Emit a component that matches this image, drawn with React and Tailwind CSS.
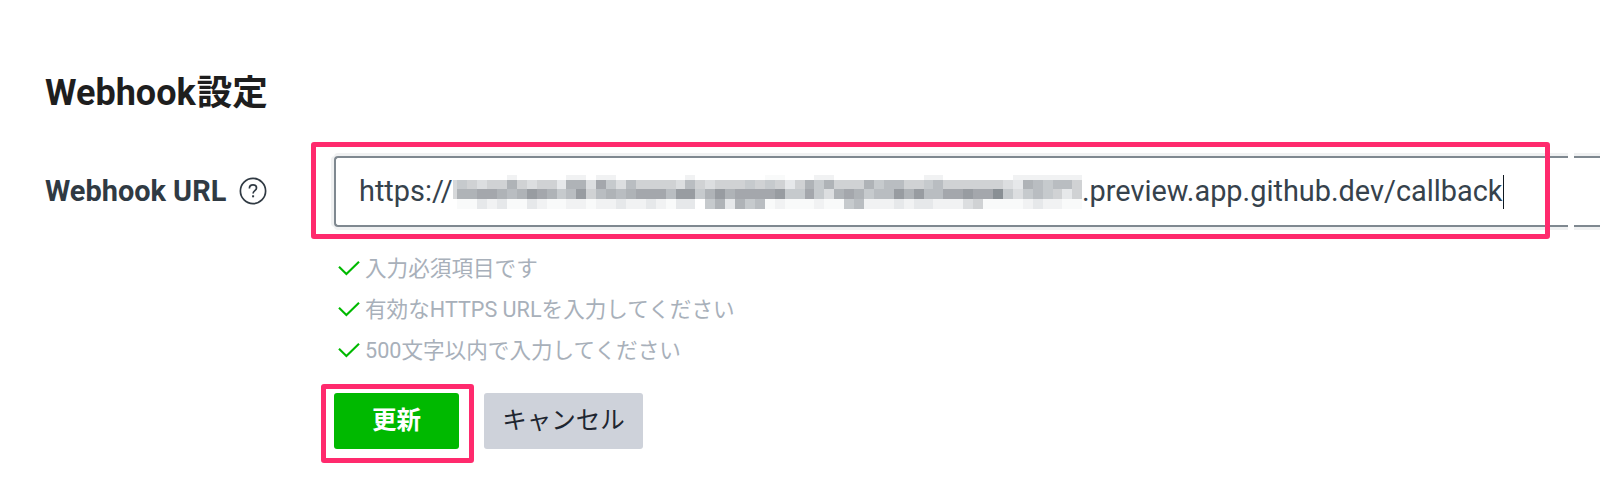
import React from "react";

const SHADES = {
  0: "#ffffff", 1: "#f9fafa", 2: "#f1f2f3", 3: "#e6e8ea", 4: "#dcdee0", 5: "#d0d2d4",
  6: "#c6cacd", 7: "#b9bdc1", 8: "#afb3b7", 9: "#a4a7ac", A: "#989ca1", B: "#898f94",
};

// One character per cell of the redacted host name, from light (0) to dark (B).
const ROWS = [
  "0000020000" + "0220220000" + "0002000000" + "0110002200" + "0000000220" + "0000002222" + "222",
  "6545585455" + "3884964755" + "5547545556" + "5653586855" + "5867755675" + "5555543876" + "775",
  "8899878A98" + "67A5787899" + "97AA68A899" + "99A6696489" + "8677A8A779" + "9A99B64676" + "535",
  "1132311321" + "1221223223" + "2133068386" + "7121112116" + "7222323322" + "2451111232" + "211",
];

const EDGES = [176, 180.7, 190.4, 200, 210];

function Mosaic() {
  return (
    <svg className="block h-[34px] w-[629px] shrink-0" viewBox="453 176 629 34" shapeRendering="crispEdges" aria-hidden="true">
      <rect x="453" y="180.7" width="5" height="19.3" fill="#d6d8da" />
      {ROWS.map((row, r) =>
        row.split("").map((c, i) => (
          <rect key={r + "-" + i} x={457.3 + i * 9.92} y={EDGES[r]} width="9.92" height={EDGES[r + 1] - EDGES[r]} fill={SHADES[c]} />
        ))
      )}
    </svg>
  );
}

function Rule({ children }) {
  return (
    <li className="flex h-[41px] items-center gap-[5px]">
      <svg className="mb-[2px] h-[16px] w-[22px] shrink-0" viewBox="0 0 22 16" fill="none" stroke="#00b900" strokeWidth="2.1" aria-hidden="true">
        <path d="M1 6.7 8.4 14 21 1.8" />
      </svg>
      <span className="text-[21.6px] leading-none whitespace-nowrap text-[#a8b0ba]">{children}</span>
    </li>
  );
}

export default function App() {
  return (
    <main className="relative h-[491px] w-[1600px] overflow-hidden bg-white pt-[71px] pl-[45px] font-[Roboto,'Noto_Sans_CJK_JP',sans-serif]">
      <h1 className="h-[44px] text-[36px] leading-[44px] font-bold whitespace-nowrap text-[#1e1e1e]">
        Webhook<span className="ml-px text-[35.5px]">設定</span>
      </h1>
      <div className="mt-[41px] flex">
        <div className="flex h-[71px] w-[289px] shrink-0 items-center">
          <span className="text-[28.9px] font-bold whitespace-nowrap text-[#303a43]">Webhook URL</span>
          <svg className="mr-[67px] mb-[2px] ml-auto h-[28px] w-[28px]" viewBox="0 0 28 28" fill="none" stroke="#303a43" strokeWidth="1.7" aria-hidden="true">
            <circle cx="14" cy="14" r="12.6" />
            <path d="M10.4 11.4c0-2.3 1.5-3.6 3.6-3.6s3.5 1.2 3.5 3.1c0 2.8-3.4 2.7-3.4 5.6" />
            <path d="M13.1 19.3h2" strokeWidth="2" />
          </svg>
        </div>
        <div className="w-[1266px] shrink-0">
          <div className="flex gap-[6px]">
            <div className="flex h-[71px] w-[1234px] shrink-0 items-center rounded-l-[4px] border-y-2 border-l-2 border-[#7f8890] pl-[23px] text-[28.9px] whitespace-nowrap text-[#36424c] shadow-[0_-3px_0_0_#f0f1f2,0_3px_0_0_#f0f1f2,-3px_0_0_0_#f0f1f2]">
              <span className="w-[94px] shrink-0">https://</span>
              <Mosaic />
              <span>.preview.app.github.dev/callback</span>
              <span className="h-[34px] w-px bg-[#101820]" />
            </div>
            <div className="h-[71px] flex-1 border-y-2 border-[#7f8890] shadow-[0_-3px_0_0_#f0f1f2,0_3px_0_0_#f0f1f2]" />
          </div>
          <ul className="mt-[21px] pl-[4px]">
            <Rule>入力必須項目です</Rule>
            <Rule>有効なHTTPS URLを入力してください</Rule>
            <Rule>500文字以内で入力してください</Rule>
          </ul>
          <div className="mt-[22px] flex gap-[25px]">
            <button className="h-[56px] w-[125px] rounded-[3px] bg-[#00b900] pt-px text-[24.5px] leading-none font-bold text-white">更新</button>
            <button className="h-[56px] w-[159px] rounded-[3px] bg-[#ced2da] text-[24.5px] leading-none text-[#1e2630]">キャンセル</button>
          </div>
        </div>
      </div>
      <div className="absolute top-[142px] left-[311px] h-[97px] w-[1239px] rounded-[3px] border-[5px] border-[#ff2a6d]" />
      <div className="absolute top-[384px] left-[321px] h-[79px] w-[153px] rounded-[3px] border-[5px] border-[#ff2a6d]" />
    </main>
  );
}
